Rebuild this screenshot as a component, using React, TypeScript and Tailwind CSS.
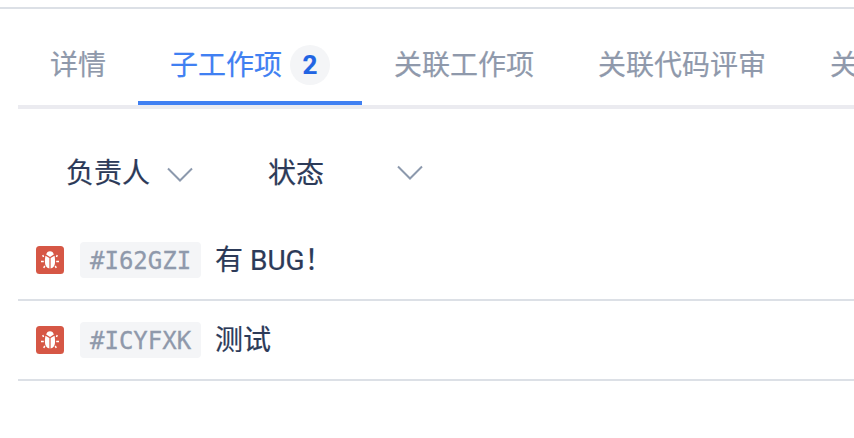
const tabs = [
  { label: '详情' },
  { label: '子工作项', count: 2 },
  { label: '关联工作项' },
  { label: '关联代码评审' },
  { label: '关联分支' },
];

const items = [
  { id: '#I62GZI', title: '有 BUG！' },
  { id: '#ICYFXK', title: '测试' },
];

function Chevron({ className }: { className: string }) {
  return (
    <svg className={className} width="26" height="16" viewBox="0 0 26 16" fill="none" stroke="#8c99ad" strokeWidth="2">
      <path d="M1 1.500L13 13.500L25 1.500" />
    </svg>
  );
}

function BugIcon() {
  return (
    <svg className="size-7 shrink-0" viewBox="0 0 28 28">
      <rect width="28" height="28" rx="3.5" fill="#d65745" />
      <path d="M10.200 8.600C10.600 6.300 12 5.200 14 5.200s3.400 1.100 3.800 3.400L14 10.900z" fill="#fff" />
      <path d="M9.500 9.700L13.400 12v10.600C10.300 22 8.900 19.400 8.900 15.800c0-2.400.2-4.500.6-6.100zM18.500 9.700L14.600 12v10.600c3.100-.6 4.500-3.200 4.500-6.800 0-2.400-.2-4.500-.6-6.100z" fill="#fff" />
      <path
        d="M6.700 9.200L7.600 11M21.300 9.200L20.400 11M5 15.400H7.800M23 15.400H20.200M7.700 21.900L8.800 20M20.300 21.900L19.200 20"
        stroke="#fff"
        strokeWidth="1.5"
        fill="none"
      />
    </svg>
  );
}

export default function App() {
  return (
    <div className="h-[438px] w-[854px] overflow-hidden bg-white pt-[7px] font-[Roboto,'Noto_Sans_CJK_SC',sans-serif] text-[28px] text-[#2c3a58] [-webkit-text-stroke-width:0.2px]">
      <div className="h-0.5 bg-[#dce0e6]" />
      <div className="ml-[18px]">
        <nav className="flex h-[100px] w-full border-b-4 border-[#ebebf0] whitespace-nowrap text-[#8f99ab]">
          {tabs.map((tab) => (
            <div
              key={tab.label}
              className={
                tab.count
                  ? 'flex h-24 shrink-0 items-start gap-2 border-b-4 border-[#4080f2] px-8 pt-[36px] text-[#4080f2]'
                  : 'flex h-24 shrink-0 items-start border-b-4 border-transparent px-8 pt-[36px]'
              }
            >
              <span className="leading-[42px]">{tab.label}</span>
              {tab.count && (
                <span className="flex size-10 items-center justify-center rounded-full bg-[#f4f5f7] font-[Roboto] text-[26px] leading-10 font-bold text-[#2164e3]">
                  {tab.count}
                </span>
              )}
            </div>
          ))}
        </nav>
        <div className="flex h-28 pt-[42px] pl-12">
          <div className="flex h-10 w-[202px]">
            <span className="pt-[3px] leading-10">负责人</span>
            <Chevron className="mt-[16px] ml-[17px]" />
          </div>
          <div className="flex h-10 w-[160px] justify-between">
            <span className="pt-[3px] leading-10">状态</span>
            <Chevron className="mt-[14px] mr-[5px]" />
          </div>
        </div>
        <ul>
          {items.map((item) => (
            <li key={item.id} className="flex h-20 items-center border-b-2 border-[#dce0e6] pl-[18px]">
              <BugIcon />
              <span className="ml-4 h-9 w-[121px] rounded bg-[#f4f5f7] pl-[10px] font-['DejaVu_Sans_Mono',monospace] text-[24px] leading-[38px] text-[#8f99ab] [-webkit-text-stroke-width:0.3px]">
                {item.id}
              </span>
              <span className="ml-[14px] pt-0.5 leading-10">{item.title}</span>
            </li>
          ))}
        </ul>
      </div>
    </div>
  );
}
